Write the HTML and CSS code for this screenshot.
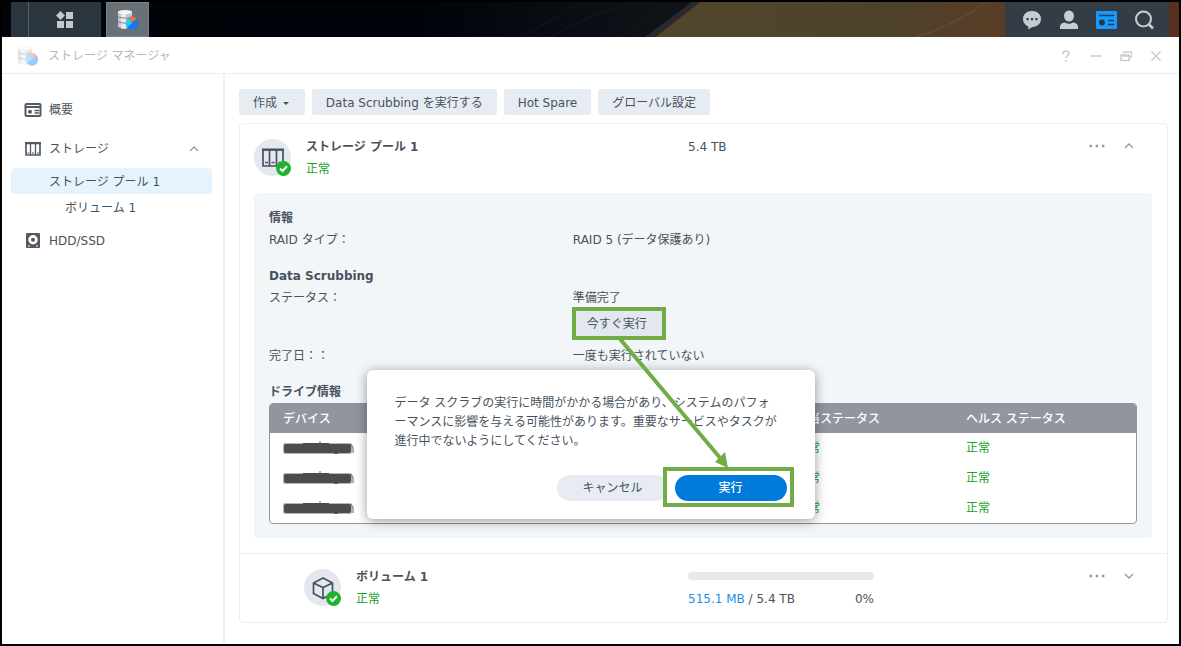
FILE: index.html
```html
<!DOCTYPE html>
<html lang="ja">
  <head>
    <meta charset="UTF-8" />
    <meta name="viewport" content="width=device-width, initial-scale=1.0" />
    <title>ストレージ マネージャ</title>
    <link rel="stylesheet" href="styles.css">
  </head>
  <body>
    <!-- shared icons -->
    <svg class="defs" aria-hidden="true">
      <symbol id="logo" viewBox="0 0 22 22">
        <path d="M1 3Q8 0 15 3V18Q8 21 1 18Z" fill="#c6c7c8" />
        <path d="M4 2.500V19.500L9 20V2Z" fill="#e9e9e9" />
        <ellipse cx="8" cy="3" rx="7" ry="2" fill="#f4f4f4" />
        <path d="M1 8Q8 10.500 15 8M1 13Q8 15.500 15 13" fill="none" stroke="#85888b" />
        <circle cx="15" cy="14.500" r="6.200" fill="#1677f2" />
        <path d="M15 14.500L10 18.200A6.200 6.200 0 0 1 12.500 8.900Z" fill="#25cdf4" />
        <path d="M15 13.500L12.300 8.500A6 6 0 0 1 19.500 9.800Z" fill="#ff6b35" />
      </symbol>
      <symbol id="bays" viewBox="0 0 22 20">
        <path d="M1 2V18H21V2ZM7.500 2V18M14.500 2V18" fill="none" stroke="currentColor" stroke-width="1.700" />
        <path d="M0 1.500H22" stroke="currentColor" stroke-width="2" />
        <path d="M3 14.500H6M9.500 14.500H12.500M16.500 14.500H19" stroke="currentColor" stroke-width="1.500" />
      </symbol>
      <symbol id="ok" viewBox="0 0 15 15">
        <circle cx="7.500" cy="7.500" r="7.500" fill="#1eb32c" />
        <path d="M4 7.500L6.500 10L11 5.300" fill="none" stroke="#fff" stroke-width="2" />
      </symbol>
      <symbol id="dots" viewBox="0 0 16 4">
        <path d="M.5.8h2.500v2.500H.5zM6.700.8h2.500v2.500H6.700zM12.900.8h2.500v2.500h-2.500z" fill="#949ba1" />
      </symbol>
      <symbol id="up" viewBox="0 0 10 6">
        <path d="M1 5L5 1L9 5" fill="none" stroke="#949ba1" stroke-width="1.300" />
      </symbol>
      <symbol id="down" viewBox="0 0 10 6">
        <path d="M1 1L5 5L9 1" fill="none" stroke="#949ba1" stroke-width="1.300" />
      </symbol>
      <symbol id="scribble" viewBox="0 0 72 14">
        <rect x="0" y="2" width="69" height="11" rx="2" fill="#b4b6b8" />
        <rect x="1" y="3" width="67" height="9" rx="2" fill="#4c4c4d" />
        <path d="M20 2H46V12H20Z" fill="#4c4c4d" />
        <path d="M37 0V3M66 4Q70 3 70 7V12M51 12.500H55" fill="none" stroke="#55606a" />
      </symbol>
    </svg>

    <header class="taskbar">
      <svg class="wallpaper" viewBox="0 0 1177 35" preserveAspectRatio="none" aria-hidden="true">
        <defs>
          <linearGradient id="night">
            <stop offset="0" stop-color="#000308" />
            <stop offset=".6" stop-color="#01030a" />
            <stop offset="1" stop-color="#11151a" />
          </linearGradient>
          <linearGradient id="sand">
            <stop offset="0" stop-color="#51452b" />
            <stop offset=".45" stop-color="#4e422b" />
            <stop offset=".65" stop-color="#593d27" />
            <stop offset="1" stop-color="#57301f" />
          </linearGradient>
        </defs>
        <path d="M0 0H698L653 35H0Z" fill="url(#night)" />
        <path d="M698 0H1177V35H653Z" fill="url(#sand)" />
        <path d="M690 0L643 35H653L698 0Z" fill="#242a30" />
        <path d="M698 0L653 35" stroke="#5d211d" />
        <path d="M580 0L520 35M632 0Q580 16 548 35M670 0L616 35" stroke="#14191e" fill="none" />
        <path d="M983 0Q960 20 915 35" stroke="#65523a" fill="none" />
      </svg>
      <button class="main-menu" aria-label="メイン メニュー">
        <svg width="18" height="18" viewBox="0 0 18 18" fill="#c3c8ce">
          <path d="M4.500 0L9 4.500L4.500 9L0 4.500ZM10 1h7v7h-7zM1 10h7v7H1zM10 10h7v7h-7z" />
        </svg>
      </button>
      <button class="task" aria-label="ストレージ マネージャ">
        <svg width="22" height="22"><use href="#logo" /></svg>
      </button>
      <div class="tray">
        <button aria-label="通知">
          <svg width="20" height="20" viewBox="0 0 20 20">
            <path d="M10 1C4.700 1 1 4.500 1 9C1 12.500 3.300 15.300 6.500 16.400L6 19.500L10.500 17C15.500 16.800 19 13.400 19 9C19 4.500 15.300 1 10 1Z" fill="#c7cbd3" />
            <path d="M4.500 8h2.200v2.200H4.500zM8.900 8h2.200v2.200H8.900zM13.300 8h2.200v2.200h-2.200z" fill="#343c45" />
          </svg>
        </button>
        <button aria-label="ユーザー">
          <svg width="20" height="20" viewBox="0 0 20 20" fill="#c9cdd3">
            <ellipse cx="10" cy="6" rx="5" ry="5.500" />
            <path d="M1 19Q0 13 6 12.500Q10 15 14 12.500Q20 13 19 19Z" />
          </svg>
        </button>
        <button aria-label="ウィジェット">
          <svg width="21" height="20" viewBox="0 0 21 20">
            <rect y="1" width="21" height="18" rx="1" fill="#139aff" />
            <path d="M3 5.500H18M12 10.500H18M12 14.500H18" stroke="#26394b" stroke-width="1.700" />
            <circle cx="6" cy="12.500" r="3" fill="#26394b" />
          </svg>
        </button>
        <button aria-label="検索">
          <svg width="20" height="20" viewBox="0 0 20 20" fill="none" stroke="#c9cdd3">
            <circle cx="9.500" cy="9" r="7.500" stroke-width="2" />
            <path d="M14.500 14L19 18.500" stroke-width="2.500" />
          </svg>
        </button>
      </div>
    </header>

    <div class="window">
      <div class="titlebar">
        <svg class="title-icon" width="22" height="22"><use href="#logo" /></svg>
        <span class="title">ストレージ マネージャ</span>
        <div class="controls">
          <button aria-label="ヘルプ">
            <svg width="12" height="12" viewBox="0 0 12 12"><path d="M3 4Q3 1 6 1Q9 1 9 3.500Q9 5 7.200 6Q6 6.800 6 8M6 10V12" /></svg>
          </button>
          <button aria-label="最小化">
            <svg width="12" height="12" viewBox="0 0 12 12"><path d="M.5 6H11.500" /></svg>
          </button>
          <button aria-label="元に戻す">
            <svg width="12" height="12" viewBox="0 0 12 12"><path d="M1 5H9V10.500H1ZM1 6H9M4 3.500V2H11.500V7H10" /></svg>
          </button>
          <button aria-label="閉じる">
            <svg width="12" height="12" viewBox="0 0 12 12"><path d="M1.500 1.500L10.500 10.500M10.500 1.500L1.500 10.500" /></svg>
          </button>
        </div>
      </div>

      <div class="body">
        <nav class="sidebar">
          <a href="#" class="item overview">
            <svg width="18" height="16" viewBox="0 0 18 16" fill="none" stroke="#505b66" stroke-width="2">
              <rect x="1.500" y="2" width="15" height="12" rx="1" />
              <path d="M2 5H16" />
              <path d="M10.500 8.500H15M10.500 11H15" stroke-width="1.300" />
              <circle cx="6" cy="9.700" r="2" stroke="none" fill="#505b66" />
            </svg>
            概要
          </a>
          <a href="#" class="item storage">
            <svg width="18" height="16" viewBox="0 0 18 16" fill="none" stroke="#505b66">
              <path d="M2 2.500V14H16V2.500Z" stroke-width="1.700" />
              <path d="M1 2H17" stroke-width="2" />
              <path d="M6.500 3V14M11.500 3V14" stroke-width="1.300" />
              <path d="M3.500 12H5.500M8 12H10M13 12H15" />
            </svg>
            ストレージ
            <svg class="fold" width="10" height="6"><use href="#up" /></svg>
          </a>
          <a href="#" class="item sub selected">ストレージ プール 1</a>
          <a href="#" class="item subsub">ボリューム 1</a>
          <a href="#" class="item">
            <svg width="18" height="16" viewBox="0 0 18 16">
              <rect x="2" y="0" width="14" height="15" rx="1" fill="#505b66" />
              <circle cx="9" cy="6.700" r="4.700" fill="#fff" />
              <circle cx="9" cy="6.700" r="2" fill="#505b66" />
              <path d="M4 13H6M12 13H14" stroke="#fff" />
            </svg>
            HDD/SSD
          </a>
        </nav>

        <main class="content">
          <div class="toolbar">
            <button>作成 <i class="caret"></i></button>
            <button>Data Scrubbing を実行する</button>
            <button>Hot Spare</button>
            <button>グローバル設定</button>
          </div>

          <div class="card">
            <section class="pool">
              <div class="summary">
                <div class="name">
                  <div class="badge">
                    <svg width="22" height="20"><use href="#bays" /></svg>
                    <svg class="ok" width="15" height="15"><use href="#ok" /></svg>
                  </div>
                  <div>
                    <h2>ストレージ プール 1</h2>
                    <p class="normal">正常</p>
                  </div>
                </div>
                <p>5.4 TB</p>
                <div class="actions">
                  <button aria-label="その他"><svg width="16" height="4"><use href="#dots" /></svg></button>
                  <button aria-label="折りたたむ"><svg width="10" height="6"><use href="#up" /></svg></button>
                </div>
              </div>

              <div class="details">
                <h3>情報</h3>
                <dl>
                  <dt>RAID タイプ：</dt>
                  <dd>RAID 5 (データ保護あり)</dd>
                </dl>
                <h3>Data Scrubbing</h3>
                <dl>
                  <dt>ステータス：</dt>
                  <dd>準備完了<br><button class="run-now">今すぐ実行</button></dd>
                  <dt>完了日：：</dt>
                  <dd>一度も実行されていない</dd>
                </dl>
                <h3>ドライブ情報</h3>
                <div class="table-box">
                  <table>
                    <thead>
                      <tr><th>デバイス</th><th class="alloc">割当ステータス</th><th class="health">ヘルス ステータス</th></tr>
                    </thead>
                    <tbody>
                      <tr><td><svg width="72" height="14"><use href="#scribble" /></svg></td><td>正常</td><td>正常</td></tr>
                      <tr><td><svg width="72" height="14"><use href="#scribble" /></svg></td><td>正常</td><td>正常</td></tr>
                      <tr><td><svg width="72" height="14"><use href="#scribble" /></svg></td><td>正常</td><td>正常</td></tr>
                    </tbody>
                  </table>
                </div>
              </div>
            </section>

            <section class="volume">
              <div class="summary">
                <div class="name">
                  <div class="badge">
                    <svg width="22" height="24" viewBox="0 0 22 24" fill="none" stroke="currentColor" stroke-width="1.700">
                      <path d="M11 2L20.500 7V17.500L11 22.500L1.500 17.500V7ZM1.500 7L11 11.500L20.500 7M11 11.500V22.500" />
                    </svg>
                    <svg class="ok" width="15" height="15"><use href="#ok" /></svg>
                  </div>
                  <div>
                    <h2>ボリューム 1</h2>
                    <p class="normal">正常</p>
                  </div>
                </div>
                <div class="usage">
                  <progress value="0" max="100" aria-label="使用率"></progress>
                  <p><span><b>515.1 MB</b> / 5.4 TB</span><span>0%</span></p>
                </div>
                <div class="actions">
                  <button aria-label="その他"><svg width="16" height="4"><use href="#dots" /></svg></button>
                  <button aria-label="展開"><svg width="10" height="6"><use href="#down" /></svg></button>
                </div>
              </div>
            </section>
          </div>
        </main>
      </div>

      <div class="dialog" role="dialog">
        <p>データ スクラブの実行に時間がかかる場合があり、システムのパフォ<br>ーマンスに影響を与える可能性があります。重要なサービスやタスクが<br>進行中でないようにしてください。</p>
        <div class="buttons">
          <button class="cancel">キャンセル</button>
          <span class="marked"><button class="run">実行</button></span>
        </div>
        <svg class="arrow" width="130" height="130" viewBox="0 0 130 130" aria-hidden="true">
          <path d="M6 0L107 120" stroke="#70ad47" stroke-width="4" />
          <path d="M114 129L101 123L111 113Z" fill="#70ad47" />
        </svg>
      </div>
    </div>
  </body>
</html>
```

FILE: styles.css
```css
* {
  box-sizing: border-box;
}

body {
  margin: 0;
  min-height: 100vh;
  display: flex;
  flex-direction: column;
  border: 2px solid #000;
  background: #fff;
  color: #48525c;
  font: 12px/22px "DejaVu Sans", "Noto Sans CJK JP", sans-serif;
}

h2,
h3,
p,
dl,
dd {
  margin: 0;
  font-size: 12px;
}

button {
  border: 0;
  padding: 0;
  background: none;
  color: inherit;
  font: inherit;
}

svg {
  display: block;
  flex: none;
}

.defs {
  position: absolute;
  width: 0;
  height: 0;
}

/* taskbar */
.taskbar {
  position: relative;
  display: flex;
  height: 35px;
  padding: 0 10px 0 9px;
  background: #000308;
}

.wallpaper {
  position: absolute;
  inset: 0;
  width: 100%;
  height: 100%;
}

.main-menu,
.task,
.tray {
  position: relative;
  display: flex;
  align-items: center;
  justify-content: center;
}

.main-menu {
  width: 90px;
  margin-right: 5px;
  padding-left: 17px;
  background: linear-gradient(90deg, #2b353e 17px, #56606a 17px, #56606a 18px, #2b353e 18px);
}

.task {
  width: 43px;
  border: 1px solid #79828a;
  background: #687078;
}

.tray {
  width: 164px;
  margin-left: auto;
  padding-left: 2px;
  gap: 17px;
  background: #343c45;
}

/* application window */
.window {
  position: relative;
  flex: 1;
  display: flex;
  flex-direction: column;
}

.titlebar {
  display: flex;
  align-items: center;
  height: 37px;
  padding: 2px 17px 0 15px;
  border-bottom: 1px solid #e6edf2;
}

.title-icon {
  opacity: 0.4;
}

.title {
  margin-left: 9px;
  color: #b3b8bc;
}

.controls {
  display: flex;
  gap: 18px;
  margin-left: auto;
}

.controls svg {
  fill: none;
  stroke: #c9cdd1;
  stroke-width: 1.5;
}

.body {
  flex: 1;
  display: flex;
}

/* sidebar */
.sidebar {
  flex: none;
  width: 223px;
  padding: 22px 11px 0 9px;
  border-right: 2px solid #edf2f6;
}

.item {
  display: flex;
  align-items: center;
  gap: 7px;
  height: 26px;
  padding: 1px 13px 0;
  border-radius: 4px;
  color: inherit;
  text-decoration: none;
}

.overview {
  margin-bottom: 13px;
}

.storage,
.subsub {
  margin-bottom: 7px;
}

.sub {
  padding-left: 38px;
}

.subsub {
  padding-left: 54px;
}

.selected {
  background: #e4f3fd;
}

.fold {
  margin-left: auto;
}

/* content */
.content {
  flex: 1;
  padding: 15px 11px 21px 14px;
}

.toolbar {
  display: flex;
  gap: 7px;
  margin-bottom: 8px;
}

.toolbar button {
  height: 26px;
  padding: 2px 14px 0;
  border-radius: 3px;
  background: #e6ecf1;
}

.caret {
  display: inline-block;
  margin: 0 2px 2px;
  border: 3px solid transparent;
  border-top-color: #48525c;
  border-bottom: 0;
}

.card {
  border: 1px solid #e8f0f5;
  border-radius: 4px;
}

.pool {
  padding: 12px 15px 15px 14px;
}

.volume {
  padding: 12px 15px 12px 14px;
  border-top: 1px solid #e8f0f5;
}

.volume .name {
  padding-left: 50px;
}

.summary {
  display: grid;
  grid-template-columns: 434px 1fr auto;
}

.name {
  display: flex;
  gap: 15px;
}

.badge {
  position: relative;
  display: flex;
  align-items: center;
  justify-content: center;
  width: 37px;
  height: 37px;
  margin-top: 3px;
  border-radius: 50%;
  background: #e2e8ee;
}

.ok {
  position: absolute;
  right: 0;
  bottom: 0;
}

.normal {
  color: #1aa329;
}

.actions {
  display: flex;
  align-items: center;
  gap: 19px;
  height: 20px;
  padding-right: 18px;
}

.details {
  margin-top: 13px;
  padding: 14px 15px 14px;
  border-radius: 4px;
  background: #f2f6f9;
}

.details dl {
  display: grid;
  grid-template-columns: 35% 1fr;
  margin-bottom: 14px;
}

.run-now {
  display: block;
  height: 33px;
  margin: -2px 0 5px -1px;
  padding: 0 15px 0 11px;
  border: 4px solid #70ad47;
  background: #e2e8ee;
}

.table-box {
  overflow: hidden;
  border: 1px solid #91979e;
  border-radius: 4px;
  background: #fff;
}

table {
  width: 100%;
  border-collapse: collapse;
}

th,
td {
  height: 29px;
  padding: 0 13px;
  text-align: left;
}

th {
  background: #91969e;
  color: #fff;
  font-weight: 500;
}

td {
  height: 30px;
  color: #1aa329;
}

.alloc {
  width: 170px;
}

.health {
  width: 183px;
}

/* volume usage */
.usage {
  width: 186px;
}

progress {
  display: block;
  width: 100%;
  height: 8px;
  margin: 6px 0 8px;
  border: 0;
  border-radius: 4px;
  appearance: none;
}

progress::-webkit-progress-bar {
  border-radius: 4px;
  background: #e6e8e9;
}

.usage p {
  display: flex;
  justify-content: space-between;
}

.usage b {
  color: #1b8fe6;
  font-weight: 400;
}

/* confirmation dialog */
.dialog {
  position: absolute;
  top: 333px;
  left: 50%;
  width: 448px;
  padding: 24px 28px 18px;
  border-radius: 6px;
  background: #fff;
  box-shadow: 0 2px 12px rgba(0, 0, 0, 0.4);
  line-height: 19px;
  white-space: nowrap;
  transform: translateX(-50%);
}

.buttons {
  display: flex;
  justify-content: flex-end;
  gap: 6px;
  margin-top: 24px;
}

.buttons button {
  width: 112px;
  height: 26px;
  padding-top: 1px;
  border-radius: 13px;
}

.cancel {
  background: #e6ecf1;
}

.buttons .run {
  position: relative;
  background: #007bdb;
  color: #fff;
  font-weight: 500;
}

/* the frame covers the end of the cancel button */
.marked {
  position: relative;
}

.marked::before {
  content: "";
  position: absolute;
  inset: -8px -7px -6px -12px;
  border: 4px solid #70ad47;
  background: #fff;
}

.arrow {
  position: absolute;
  top: -31px;
  left: 247px;
}
```
